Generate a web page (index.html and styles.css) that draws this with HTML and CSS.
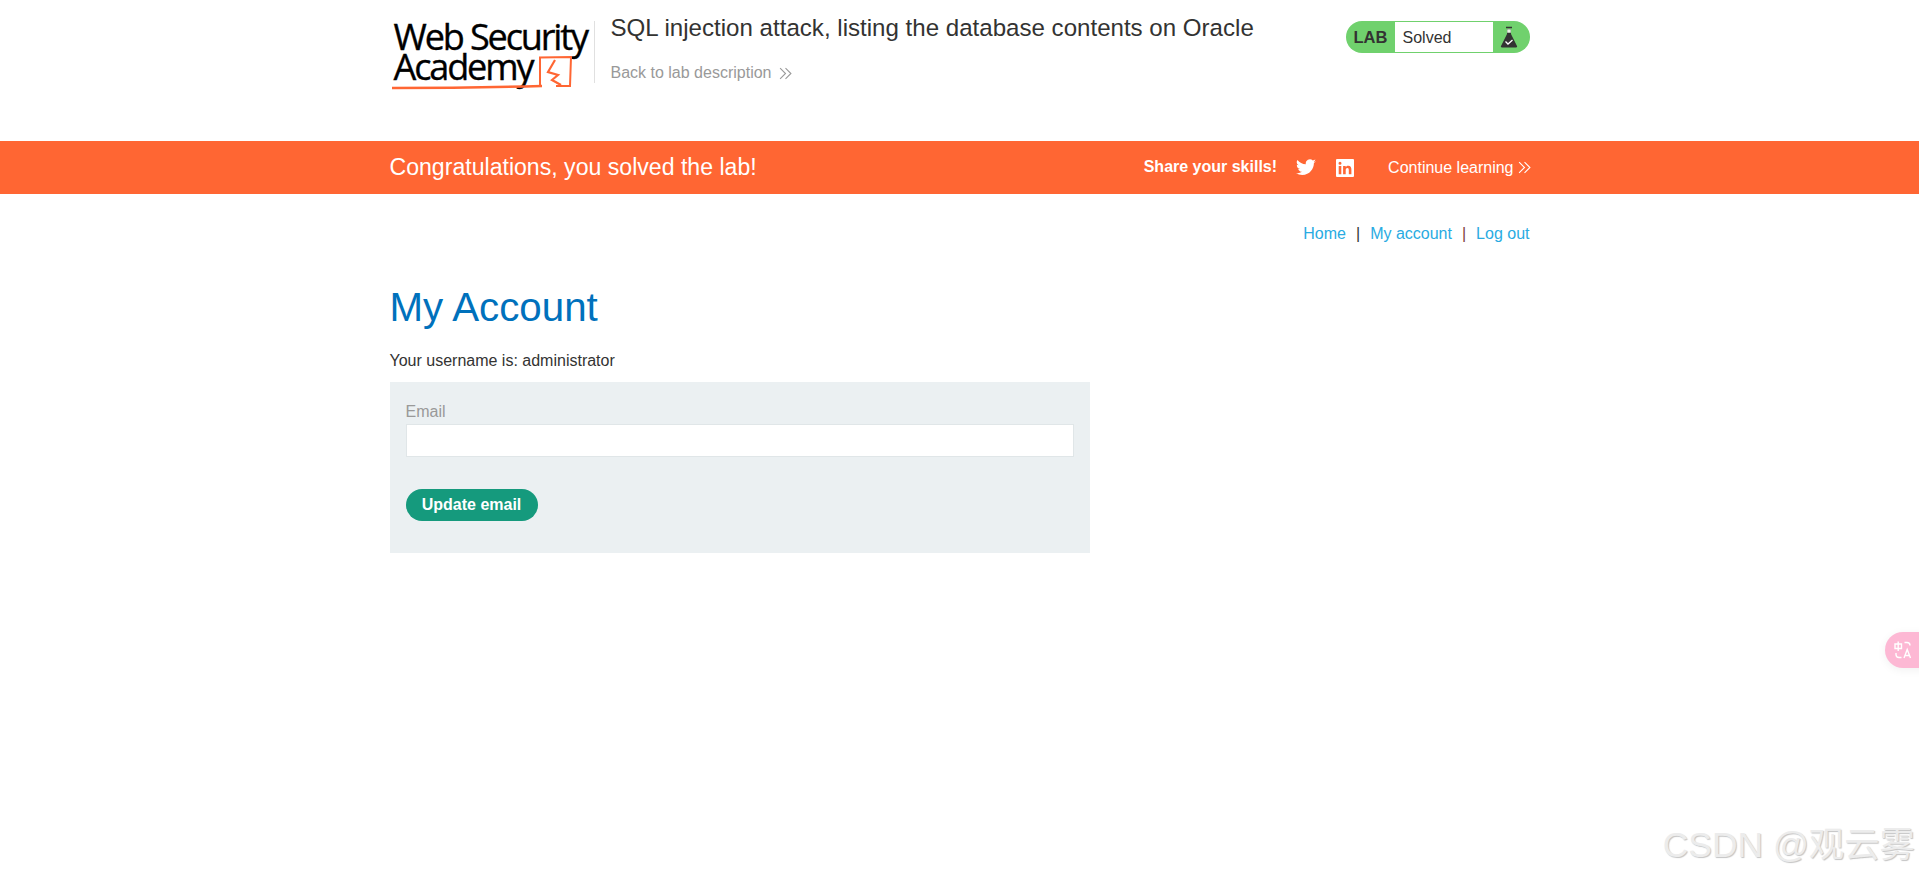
FILE: index.html
```html
<!DOCTYPE html>
<html lang="en">
<head>
<meta charset="utf-8">
<title>My Account</title>
<link rel="stylesheet" href="styles.css">
</head>
<body>
<header class="top">
  <div class="wrap top-inner">
    <div class="logo">
      <span class="logo-text">Web Security<br>Academy</span>
      <svg class="logo-mark" width="184" height="72" viewBox="0 0 184 72" fill="none" stroke="#ff6633">
        <path d="M2 67C50 67 100 66.500 152 65" stroke-width="2.500"/>
        <path d="M150 65V36.500L181 36L180 65H166" stroke-width="2"/>
        <path d="M165 39L158 51L168 54L162 59L171 64" stroke-width="2.200"/>
      </svg>
    </div>
    <div class="title-block">
      <h2 class="lab-title">SQL injection attack, listing the database contents on Oracle</h2>
      <a class="back">Back to lab description
        <svg class="chev" width="13" height="13" viewBox="0 0 12 12" fill="none" stroke="currentColor"><path d="M1 1l5 5-5 5M6 1l5 5-5 5"/></svg>
      </a>
    </div>
    <div class="status">
      <span class="status-lab">LAB</span>
      <span class="status-text">Solved</span>
      <span class="status-icon">
        <svg width="18" height="22" viewBox="0 0 18 22">
          <path d="M6 1.500h6" stroke="#333" stroke-width="1.500"/>
          <path d="M7 3h4v5l6 12a1 1 0 0 1-1 1.500H2A1 1 0 0 1 1 20L7 8z" fill="#333"/>
          <path d="M7.200 3.200h3.600v3.500H7.200z" fill="#e8f5e4"/>
          <path d="M5.500 15.500l2.500 2.500 4.500-4" fill="none" stroke="#fff" stroke-width="1.300"/>
        </svg>
      </span>
    </div>
  </div>
</header>
<section class="banner">
  <div class="wrap banner-inner">
    <h4 class="congrats">Congratulations, you solved the lab!</h4>
    <div class="share">
      <span class="share-label">Share your skills!</span>
      <svg class="tw" width="20" height="17" viewBox="0 0 24 20" fill="#fff"><path d="M24 2.400a9.800 9.800 0 0 1-2.800.8A4.900 4.900 0 0 0 23.300.5a9.800 9.800 0 0 1-3.100 1.200A4.900 4.900 0 0 0 11.800 6.100 13.900 13.900 0 0 1 1.700.9a4.900 4.900 0 0 0 1.500 6.500 4.900 4.900 0 0 1-2.200-.6v.1a4.900 4.900 0 0 0 3.900 4.800 4.900 4.900 0 0 1-2.200.1 4.900 4.900 0 0 0 4.600 3.400A9.900 9.900 0 0 1 0 16.700 13.900 13.900 0 0 0 7.500 19c9.100 0 14-7.500 14-14v-.6A10 10 0 0 0 24 2.400z"/></svg>
      <svg class="li" width="18" height="18" viewBox="0 0 18 18"><path fill="#fff" fill-rule="evenodd" d="M1 0h16a1 1 0 0 1 1 1v16a1 1 0 0 1-1 1H1a1 1 0 0 1-1-1V1a1 1 0 0 1 1-1zM2.700 6.900V15.300H5.300V6.900zM4 2.700a1.500 1.500 0 1 0 0 3 1.500 1.500 0 0 0 0-3zM7.100 6.900V15.300H9.700V11.100C9.700 10 10 8.900 11.400 8.900S12.800 10.100 12.800 11.200V15.300H15.400V10.700C15.400 8.400 14.900 6.700 12.200 6.700 10.900 6.700 10.100 7.400 9.700 8.100V6.900z"/></svg>
    </div>
    <a class="continue">Continue learning
      <svg class="chev" width="13" height="13" viewBox="0 0 12 12" fill="none" stroke="currentColor"><path d="M1 1l5 5-5 5M6 1l5 5-5 5"/></svg>
    </a>
  </div>
</section>
<main class="wrap">
  <nav class="nav"><a>Home</a><span class="sep">|</span><a>My account</a><span class="sep sep-red">|</span><a>Log out</a></nav>
  <h1 class="page-title">My Account</h1>
  <p class="username">Your username is: administrator</p>
  <form class="email-form">
    <label class="email-label" for="email">Email</label>
    <input class="email-input" id="email" type="email">
    <button class="update" type="button">Update email</button>
  </form>
</main>
<div class="translate">
  <svg width="20" height="20" viewBox="0 0 20 20" fill="none" stroke="#fff" stroke-width="1.400">
    <path d="M2 4h6.500v4.500H2zM5.200 1.500v9.500"/>
    <path d="M11.500 2.500h2.500a3 3 0 0 1 3 3M3 13v1.500a3 3 0 0 0 3 3h2.500"/>
    <path d="M11 18l3.200-8.500 3.300 8.500M12.200 15.500h4"/>
  </svg>
</div>
<div class="watermark">CSDN @观云雾</div>
</body>
</html>
```
FILE: styles.css
```css
* { box-sizing: border-box; }
html, body { margin: 0; height: 100%; }
body {
  position: relative;
  height: 877px;
  overflow: hidden;
  background: #fff;
  color: #333332;
  font-family: "Liberation Sans", Arial, sans-serif;
  font-size: 16px;
}
.wrap { width: 1140px; margin: 0 auto; }
.top { height: 141px; }
.top-inner { display: flex; align-items: flex-start; position: relative; }
.logo {
  position: relative;
  width: 205px;
  height: 62px;
  margin-top: 21px;
  padding-left: 4px;
  border-right: 1px solid #e0e0e0;
}
.logo-text {
  display: block;
  position: relative;
  font-family: "Open Sans", sans-serif;
  font-size: 36.100px;
  line-height: 30px;
  letter-spacing: -2.150px;
  color: #000;
  -webkit-text-stroke: 0.35px #000;
}
.logo-mark { position: absolute; left: 0; top: 0; }
.title-block { margin-left: 16px; flex: 1; }
.lab-title {
  margin: 15px 0 0;
  font-size: 24.100px;
  font-weight: 400;
  line-height: 26px;
  color: #333332;
}
.back {
  display: flex;
  align-items: center;
  gap: 8px;
  margin-top: 22px;
  color: #999;
  font-size: 16px;
  line-height: 20px;
}
.chev { flex: none; }
.status {
  display: flex;
  flex: none;
  width: 184px;
  height: 32px;
  margin-top: 21px;
  background: #70d16d;
  border-radius: 16px;
  overflow: hidden;
}
.status-lab {
  width: 49px;
  padding-left: 8px;
  font-weight: 700;
  font-size: 16.500px;
  line-height: 33px;
  color: #333332;
}
.status-text {
  width: 98px;
  margin: 1px 0;
  padding-left: 8px;
  background: #fff;
  font-size: 16px;
  line-height: 31px;
}
.status-icon { display: flex; flex: 1; align-items: center; justify-content: center; padding-right: 4px; }
.banner { height: 53px; background: #ff6633; color: #fff; }
.banner-inner { display: flex; align-items: center; height: 100%; }
.congrats { margin: 0; flex: 1; font-size: 23.100px; font-weight: 400; }
.share { display: flex; align-items: center; }
.share-label { font-weight: 700; font-size: 16px; position: relative; top: -1px; }
.tw { margin-left: 19px; }
.li { margin-left: 20px; }
.continue { display: flex; align-items: center; gap: 4px; margin-left: 34px; margin-right: -1px; font-size: 16px; }
.nav { display: flex; justify-content: flex-end; margin-top: 31px; line-height: 18px; color: #29abe2; }
.sep { margin: 0 10px; color: #333332; }
.sep-red { color: #7d3a3a; }
.page-title { margin: 42px 0 0; font-size: 40.300px; font-weight: 400; line-height: 46px; color: #0071bc; }
.username { margin: 21px 0 0; line-height: 18px; color: #333332; }
.email-form {
  display: flex;
  flex-direction: column;
  align-items: flex-start;
  width: 700px;
  height: 171px;
  margin-top: 12px;
  padding: 21px 16px 0;
  background: #ebf0f2;
}
.email-label { color: #999; line-height: 18px; margin-bottom: 3px; }
.email-input {
  display: block;
  width: 100%;
  height: 33px;
  background: #fff;
  border: 1px solid #e0e6e8;
  outline: none;
  padding: 0;
}
.update {
  width: 132px;
  height: 32px;
  margin-top: 32px;
  padding: 0;
  border: 0;
  border-radius: 16px;
  background: #159a7d;
  color: #fff;
  font-family: "Liberation Sans", Arial, sans-serif;
  font-weight: 700;
  font-size: 16px;
}
.translate {
  position: absolute;
  left: 1885px;
  top: 632px;
  display: flex;
  align-items: center;
  width: 60px;
  height: 36px;
  padding-left: 8px;
  border-radius: 18px;
  background: #fdb8d4;
  box-shadow: 0 2px 10px rgba(0,0,0,.06);
}
.watermark {
  position: absolute;
  right: 4px;
  bottom: 10px;
  font-family: "Liberation Sans", "Noto Sans CJK SC", sans-serif;
  font-size: 35.400px;
  line-height: 44px;
  color: #ececec;
  text-shadow: 1px 1px 1px #c4c4c4;
  white-space: nowrap;
}
```
